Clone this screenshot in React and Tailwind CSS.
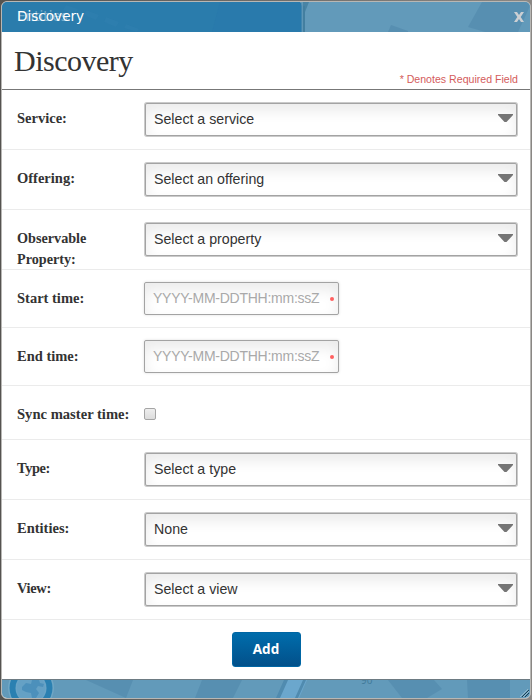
import React from 'react';

const SANS = "font-['Liberation_Sans',Arial,sans-serif]";
const label = "w-[127px] shrink-0 pt-[18px] font-['Liberation_Serif',serif] leading-[21px] font-bold text-[#333]";

function Row({ name, height, size = 'text-[14.5px]', children }) {
  return (
    <div className={`flex shrink-0 items-start border-b border-[#ebebeb] pl-[15px] ${height}`}>
      <div className={`${label} ${size}`}>{name}</div>
      {children}
    </div>
  );
}

function SelectRow({ name, value, size }) {
  return (
    <Row name={name} height="h-[60px]" size={size}>
      <button className={`mt-[13px] ml-px flex h-[33px] w-[372px] items-center justify-between rounded-[2px] border border-[#a3a3a3] bg-white pr-1 pl-2 text-[14.2px] text-[#333] shadow-[inset_0_7px_14px_#ebebeb,0_0_0_1px_#cacaca] ${SANS}`}>
        <span>{value}</span>
        <svg className="-mr-px mb-[3px] h-2 w-[15px] shrink-0" viewBox="0 0 15 8"><path d="M0 0h15v1L8.500 8h-2L0 1z" fill="#757575" /></svg>
      </button>
    </Row>
  );
}

function TimeRow({ name }) {
  return (
    <Row name={name} height="h-[58px]">
      <div className={`mt-3 flex h-[33px] w-[195px] items-center justify-between rounded-[2px] border border-[#a3a3a3] bg-white pr-1 pl-2 shadow-[inset_0_7px_14px_#ebebeb,0_0_3px_#ddd] ${SANS}`}>
        <input className="w-[172px] bg-transparent text-[14px] tracking-[-0.25px] outline-none placeholder:text-[#a9a9a9]" placeholder="YYYY-MM-DDTHH:mm:ssZ" />
        <span className="mt-px size-1 rounded-full bg-[#ff6060]" />
      </div>
    </Row>
  );
}

function Header() {
  return (
    <header className="relative h-[30px] shrink-0 overflow-hidden bg-[#629aba]">
      <svg className="absolute inset-0 h-[30px] w-[528px]" viewBox="0 0 528 30">
        <path d="M480 0h48v4l-12 26h-33l-17-5zM389 23l17 6v1h-20z" fill="#568daf" opacity=".85" />
        <path d="M301 0h6l-4 10v20h-2z" fill="#427c9e" opacity=".75" />
        <path d="M0 0h298q2 1 2 4v26H0z" fill="#2a7cac" />
        <path d="M218 0h80q2 1 2 4v26H210z" fill="#2778ab" opacity=".5" />
        <path d="M64 3l12 4-3 5-12-4zm20 5l13 5-3 5-12-5zm20 7l13 5-3 5-12-5zm20 7l13 5-2 3-13-4z" fill="#3983b2" opacity=".25" />
        <path d="M298 0q2 1 2 4v26" fill="none" stroke="#5b92b2" />
        <path d="M302 4v26" stroke="#3d7899" opacity=".7" />
      </svg>
      <div className="relative flex h-[30px] items-center justify-between pr-[6px] pl-[15px] font-['DejaVu_Sans',sans-serif] text-white">
        <div className="relative -mt-[2px] text-[13.6px] leading-[20px]">
          <span className="absolute top-0 left-0 opacity-35">Entities</span>
          <span className="relative">Discovery</span>
        </div>
        <svg className="size-[10px] text-[#cbcfd3]" viewBox="0 0 10 10"><path d="M0 0h3l2 3 2-3h3L6.700 5 10 10H7L5 7l-2 3H0l3.300-5z" fill="currentColor" /></svg>
      </div>
    </header>
  );
}

function Footer() {
  return (
    <footer className="h-[19px] shrink-0 border-t border-[#6d7b83] bg-[#629aba]">
      <svg className="h-[18px] w-[528px]" viewBox="0 0 528 18">
        <circle cx="29" cy="8" r="23" fill="#70a7c5" />
        <circle cx="29" cy="8" r="21.500" fill="#2a80b1" />
        <circle cx="29" cy="8" r="15.500" fill="#69a4c7" />
        <circle cx="29" cy="8" r="14" fill="#65a1c5" />
        <path d="M20 7l4-4 5 1 1-4h7l1 3 4 1-1 3-5-1-2 3 3 4-3 5h-4l-1-5-5-1-4-2z" fill="#4189b6" opacity=".7" />
        <path d="M84 0h47l-7 18zm116 0h40l-9 18h-38zm186 0h46l8 9-15 9h-25zm79 0h43v18h-42z" fill="#568daf" opacity=".85" />
        <path d="M285 0h20l-8 18h-20z" fill="#6ba7cd" />
        <path d="M282 0h4l-8 18h-4zm19 0h3l-8 18h-3z" fill="#508baf" />
        <text x="359" y="4" fill="#407999" fontSize="10" fontFamily="Open Sans">90</text>
        <path d="M520 17l7-7m-4 7l4-4" stroke="#183f52" strokeWidth="1" />
        <path d="M518 17l8-8m-5 8l6-6" stroke="#b9ced7" strokeWidth=".6" />
      </svg>
    </footer>
  );
}

export default function App() {
  return (
    <main className="h-[700px] w-[532px] bg-gradient-to-r from-[#555350] to-[#8a8784] p-px">
      <section className="flex h-[698px] w-[530px] flex-col overflow-hidden rounded-[6px] border border-[#b8b7b4] bg-white">
        <Header />
        <div className="flex h-[58px] shrink-0 items-start justify-between border-b border-[#777] px-3">
          <h1 className="mt-[11px] font-['Liberation_Serif',serif] text-[30px] leading-[36px] tracking-[-0.5px] text-[#333]">Discovery</h1>
          <span className={`mt-[40px] text-[10.6px] leading-[15px] text-[#d45b5b] ${SANS}`}>* Denotes Required Field</span>
        </div>
        <SelectRow name="Service:" value="Select a service" />
        <SelectRow name="Offering:" value="Select an offering" />
        <SelectRow name="Observable Property:" value="Select a property" size="text-[14.2px]" />
        <TimeRow name="Start time:" />
        <TimeRow name="End time:" />
        <Row name="Sync master time:" height="h-[54px]" size="text-[14.6px]">
          <div className="mt-[22px] size-3 rounded-[2px] border border-[#a5a5a5] bg-gradient-to-b from-[#eee] to-[#dcdcdc]" />
        </Row>
        <SelectRow name="Type:" value="Select a type" size="text-[14.4px] tracking-[-0.4px]" />
        <SelectRow name="Entities:" value="None" />
        <SelectRow name="View:" value="Select a view" size="text-[14.4px] tracking-[-0.3px]" />
        <div className="flex h-[59px] shrink-0 items-start justify-center pt-3">
          <button className="h-[35px] w-[69px] rounded-[3px] border border-[#0066a4] bg-gradient-to-b from-[#006dac] to-[#02508a] font-['Open_Sans',sans-serif] text-[13.5px] font-bold text-white">Add</button>
        </div>
        <Footer />
      </section>
    </main>
  );
}
